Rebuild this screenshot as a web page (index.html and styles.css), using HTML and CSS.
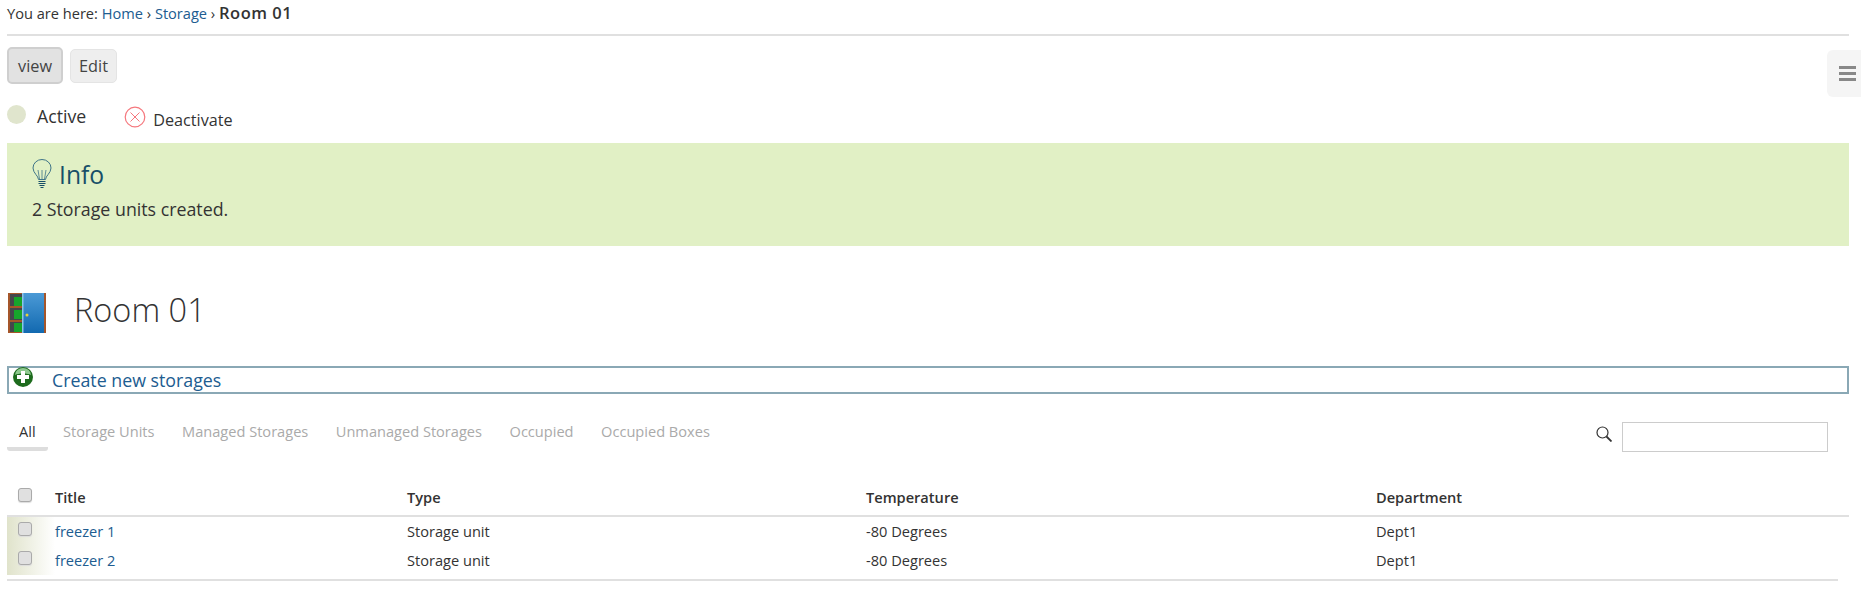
FILE: index.html
```html
<!DOCTYPE html>
<html lang="en">
<head>
    <meta charset="UTF-8">
    <title>Room 01</title>
    <link rel="stylesheet" href="styles.css">
</head>
<body>
    <div class="breadcrumb">
        You are here: <a href="#">Home</a> › <a href="#">Storage</a> › <strong>Room 01</strong>
    </div>

    <div class="view-tabs">
        <a class="view-tab selected" href="#">view</a>
        <a class="view-tab" href="#">Edit</a>
    </div>

    <a class="menu-toggle" href="#"><span></span><span></span><span></span></a>

    <div class="state-row">
        <span class="state-dot"></span>
        <span class="state-label">Active</span>
        <svg class="deactivate-icon" width="22" height="22" viewBox="0 0 22 22">
            <circle cx="11" cy="11" r="9.8" fill="none" stroke="#f5777d" stroke-width="1.2"/>
            <path d="M6.5 6.5l9 9M15.5 6.5l-9 9" stroke="#f5777d" stroke-width="1"/>
        </svg>
        <span class="deactivate-label">Deactivate</span>
    </div>

    <div class="info-box">
        <div class="info-title">
            <svg width="20" height="30" viewBox="0 0 20 30">
                <path d="M6.5 20.5c0-3.500-5.500-6.500-5.500-11.500a9 8.500 0 0 1 18 0c0 5-5.500 8-5.500 11.500z" fill="none" stroke="#3f7488" stroke-width="1"/>
                <path d="M7.500 20l-1.500-9M12.500 20l1.500-9M10 20v-9" fill="none" stroke="#3f7488" stroke-width=".8"/>
                <path d="M6.500 22.500h7M6.500 24.500h7M7.500 26.500h5M8.500 28.500h3" stroke="#174f68" stroke-width="1.200"/>
            </svg>
            <span>Info</span>
        </div>
        <p>2 Storage units created.</p>
    </div>

    <div class="page-title">
        <svg width="38" height="40" viewBox="0 0 38 40">
            <defs>
                <linearGradient id="doorBlue" x1="0" y1="0" x2="0" y2="1">
                    <stop offset="0" stop-color="#4b9ad6"/>
                    <stop offset="1" stop-color="#1269b0"/>
                </linearGradient>
            </defs>
            <rect x="0" y="0" width="38" height="40" fill="#a5562a"/>
            <rect x="2" y="1" width="12" height="38" fill="#44474c"/>
            <rect x="6" y="4" width="8" height="9" fill="#16a52c"/>
            <rect x="6" y="17" width="8" height="9" fill="#16a52c"/>
            <rect x="6" y="30" width="8" height="9" fill="#16a52c"/>
            <rect x="0" y="13" width="14" height="2" fill="#a5562a"/>
            <rect x="0" y="27" width="14" height="2" fill="#a5562a"/>
            <rect x="14" y="0" width="22" height="40" fill="url(#doorBlue)"/>
            <rect x="14" y="0" width="1.500" height="40" fill="#8cc4ea"/>
            <circle cx="19" cy="22" r="1.500" fill="#e6d23a"/>
        </svg>
        <h1>Room 01</h1>
    </div>

    <a class="create-link" href="#">
        <svg width="20" height="20" viewBox="0 0 20 20">
            <circle cx="10" cy="10" r="10" fill="#1d6b1d"/>
            <path d="M2 8a8 7 0 0 1 16 0c-3-2-13-2-16 0z" fill="#8fc98f"/>
            <path d="M8 4h4v4h4v4h-4v4H8v-4H4V8h4z" fill="#fff"/>
        </svg>
        <span>Create new storages</span>
    </a>

    <div class="filter-row">
        <ul class="filters">
            <li class="active">All</li>
            <li>Storage Units</li>
            <li>Managed Storages</li>
            <li>Unmanaged Storages</li>
            <li>Occupied</li>
            <li>Occupied Boxes</li>
        </ul>
        <div class="search">
            <svg width="16" height="16" viewBox="0 0 16 16">
                <circle cx="6.500" cy="6.500" r="5.500" fill="none" stroke="#333" stroke-width="1.200"/>
                <path d="M10.500 10.500l5 5" stroke="#333" stroke-width="1.800"/>
            </svg>
            <input type="text">
        </div>
    </div>

    <table class="listing">
        <thead>
            <tr>
                <th class="col-check"><span class="check"></span></th>
                <th class="col-title">Title</th>
                <th class="col-type">Type</th>
                <th class="col-temp">Temperature</th>
                <th>Department</th>
            </tr>
        </thead>
        <tbody>
            <tr>
                <td class="col-check state-active"><span class="check"></span></td>
                <td><a href="#">freezer 1</a></td>
                <td>Storage unit</td>
                <td>-80 Degrees</td>
                <td>Dept1</td>
            </tr>
            <tr>
                <td class="col-check state-active"><span class="check"></span></td>
                <td><a href="#">freezer 2</a></td>
                <td>Storage unit</td>
                <td>-80 Degrees</td>
                <td>Dept1</td>
            </tr>
        </tbody>
    </table>
    <div class="table-end"></div>
</body>
</html>
```

FILE: styles.css
```css
body {
    margin: 0;
    padding: 0 12px 0 7px;
    font-family: "Open Sans", sans-serif;
    font-size: 14.600px;
    color: #333;
    background-color: #fff;
}

a {
    color: #205c90;
    text-decoration: none;
}

.breadcrumb {
    height: 34px;
    line-height: 26px;
    border-bottom: 2px solid #e0e0e0;
    white-space: nowrap;
}

.breadcrumb strong {
    font-size: 16.500px;
    font-weight: 600;
    letter-spacing: .5px;
}

.view-tabs {
    display: flex;
    align-items: center;
    gap: 7px;
    margin-top: 11px;
    height: 37px;
}

.view-tab {
    display: block;
    padding: 0 8px;
    height: 34px;
    line-height: 32px;
    font-size: 16.300px;
    color: #444;
    background-color: #eee;
    border: 1px solid #e4e4e4;
    border-radius: 5px;
    box-sizing: border-box;
}

.view-tab.selected {
    height: 37px;
    line-height: 34px;
    padding: 0 9px;
    background-color: #e2e2e2;
    border: 2px solid #cfcfcf;
}

.menu-toggle {
    position: absolute;
    top: 50px;
    right: 0;
    width: 34px;
    height: 47px;
    background-color: #f5f5f5;
    border-radius: 6px 0 0 6px;
    display: flex;
    flex-direction: column;
    align-items: flex-end;
    justify-content: center;
    gap: 3px;
    padding-right: 5px;
    box-sizing: border-box;
}

.menu-toggle span {
    display: block;
    width: 17px;
    height: 3px;
    background-color: #888;
}

.state-row {
    display: flex;
    align-items: flex-start;
    height: 39px;
    margin-top: 20px;
}

.state-dot {
    width: 19px;
    height: 19px;
    border-radius: 50%;
    background-color: #e0e5cd;
    margin-top: 1px;
}

.state-label {
    font-size: 17.700px;
    margin-left: 11px;
}

.deactivate-icon {
    margin-left: 38px;
    margin-top: 2px;
}

.deactivate-label {
    font-size: 16.200px;
    margin-left: 7px;
    margin-top: 5px;
}

.info-box {
    height: 103px;
    padding: 14px 25px 0;
    background-color: #e1f0c5;
    box-sizing: border-box;
}

.info-title {
    display: flex;
    align-items: center;
    gap: 7px;
    height: 34px;
    font-size: 24.700px;
    color: #174f68;
}

.info-box p {
    margin: 6px 0 0;
    font-size: 17.800px;
}

.page-title {
    display: flex;
    align-items: center;
    height: 42px;
    margin-top: 46px;
    padding-left: 1px;
}

.page-title h1 {
    margin: -7px 0 0 28px;
    font-size: 32.500px;
    font-weight: 300;
    color: #333;
}

.create-link {
    display: flex;
    align-items: flex-start;
    height: 28px;
    margin-top: 32px;
    border: 2px solid #8aa8b5;
    box-sizing: border-box;
    font-size: 17.800px;
    line-height: 24px;
}

.create-link svg {
    margin: -1px 0 0 4px;
}

.create-link span {
    margin-left: 19px;
}

.filter-row {
    display: flex;
    justify-content: space-between;
    align-items: flex-start;
    margin-top: 25px;
    padding-right: 21px;
}

.filters {
    display: flex;
    list-style: none;
    margin: 0;
    padding: 0;
    font-size: 14.600px;
    color: #aaa;
}

.filters li {
    height: 28px;
    line-height: 24px;
    padding: 0 12px;
    margin-right: 3.500px;
    border-bottom: 4px solid transparent;
    border-radius: 0 0 3px 3px;
}

.filters li.active {
    color: #333;
    border-bottom-color: #ddd;
}

.search {
    display: flex;
    align-items: center;
    gap: 10px;
    margin-top: 3px;
}

.search svg {
    margin-top: -7px;
}

.search input {
    width: 206px;
    height: 30px;
    border: 1px solid #ccc;
    box-sizing: border-box;
    padding: 0 4px;
    outline: none;
}

.listing {
    width: 100%;
    margin-top: 29px;
    border-collapse: collapse;
    font-size: 14.600px;
}

.listing th {
    height: 31px;
    padding: 0 0 3px;
    text-align: left;
    font-weight: 600;
    border-bottom: 2px solid #e0e0e0;
}

.listing td {
    height: 27px;
    padding: 0 0 2px;
}

.col-check {
    width: 48px;
    text-align: center;
}

.col-check .check {
    display: block;
    margin: -3px 0 0 11px;
}

.col-title {
    width: 352px;
}

.col-type {
    width: 459px;
}

.col-temp {
    width: 510px;
}

.state-active {
    background: linear-gradient(to right, #e0e3cb, #fff);
}

.check {
    width: 14px;
    height: 14px;
    box-sizing: border-box;
    background-color: #e0e0e0;
    border: 1px solid #aaa;
    border-radius: 3px;
    box-shadow: 0 1px 1px #ddd;
}

.table-end {
    width: calc(100% - 11px);
    margin-top: 4px;
    border-bottom: 2px solid #e0e0e0;
}
```
